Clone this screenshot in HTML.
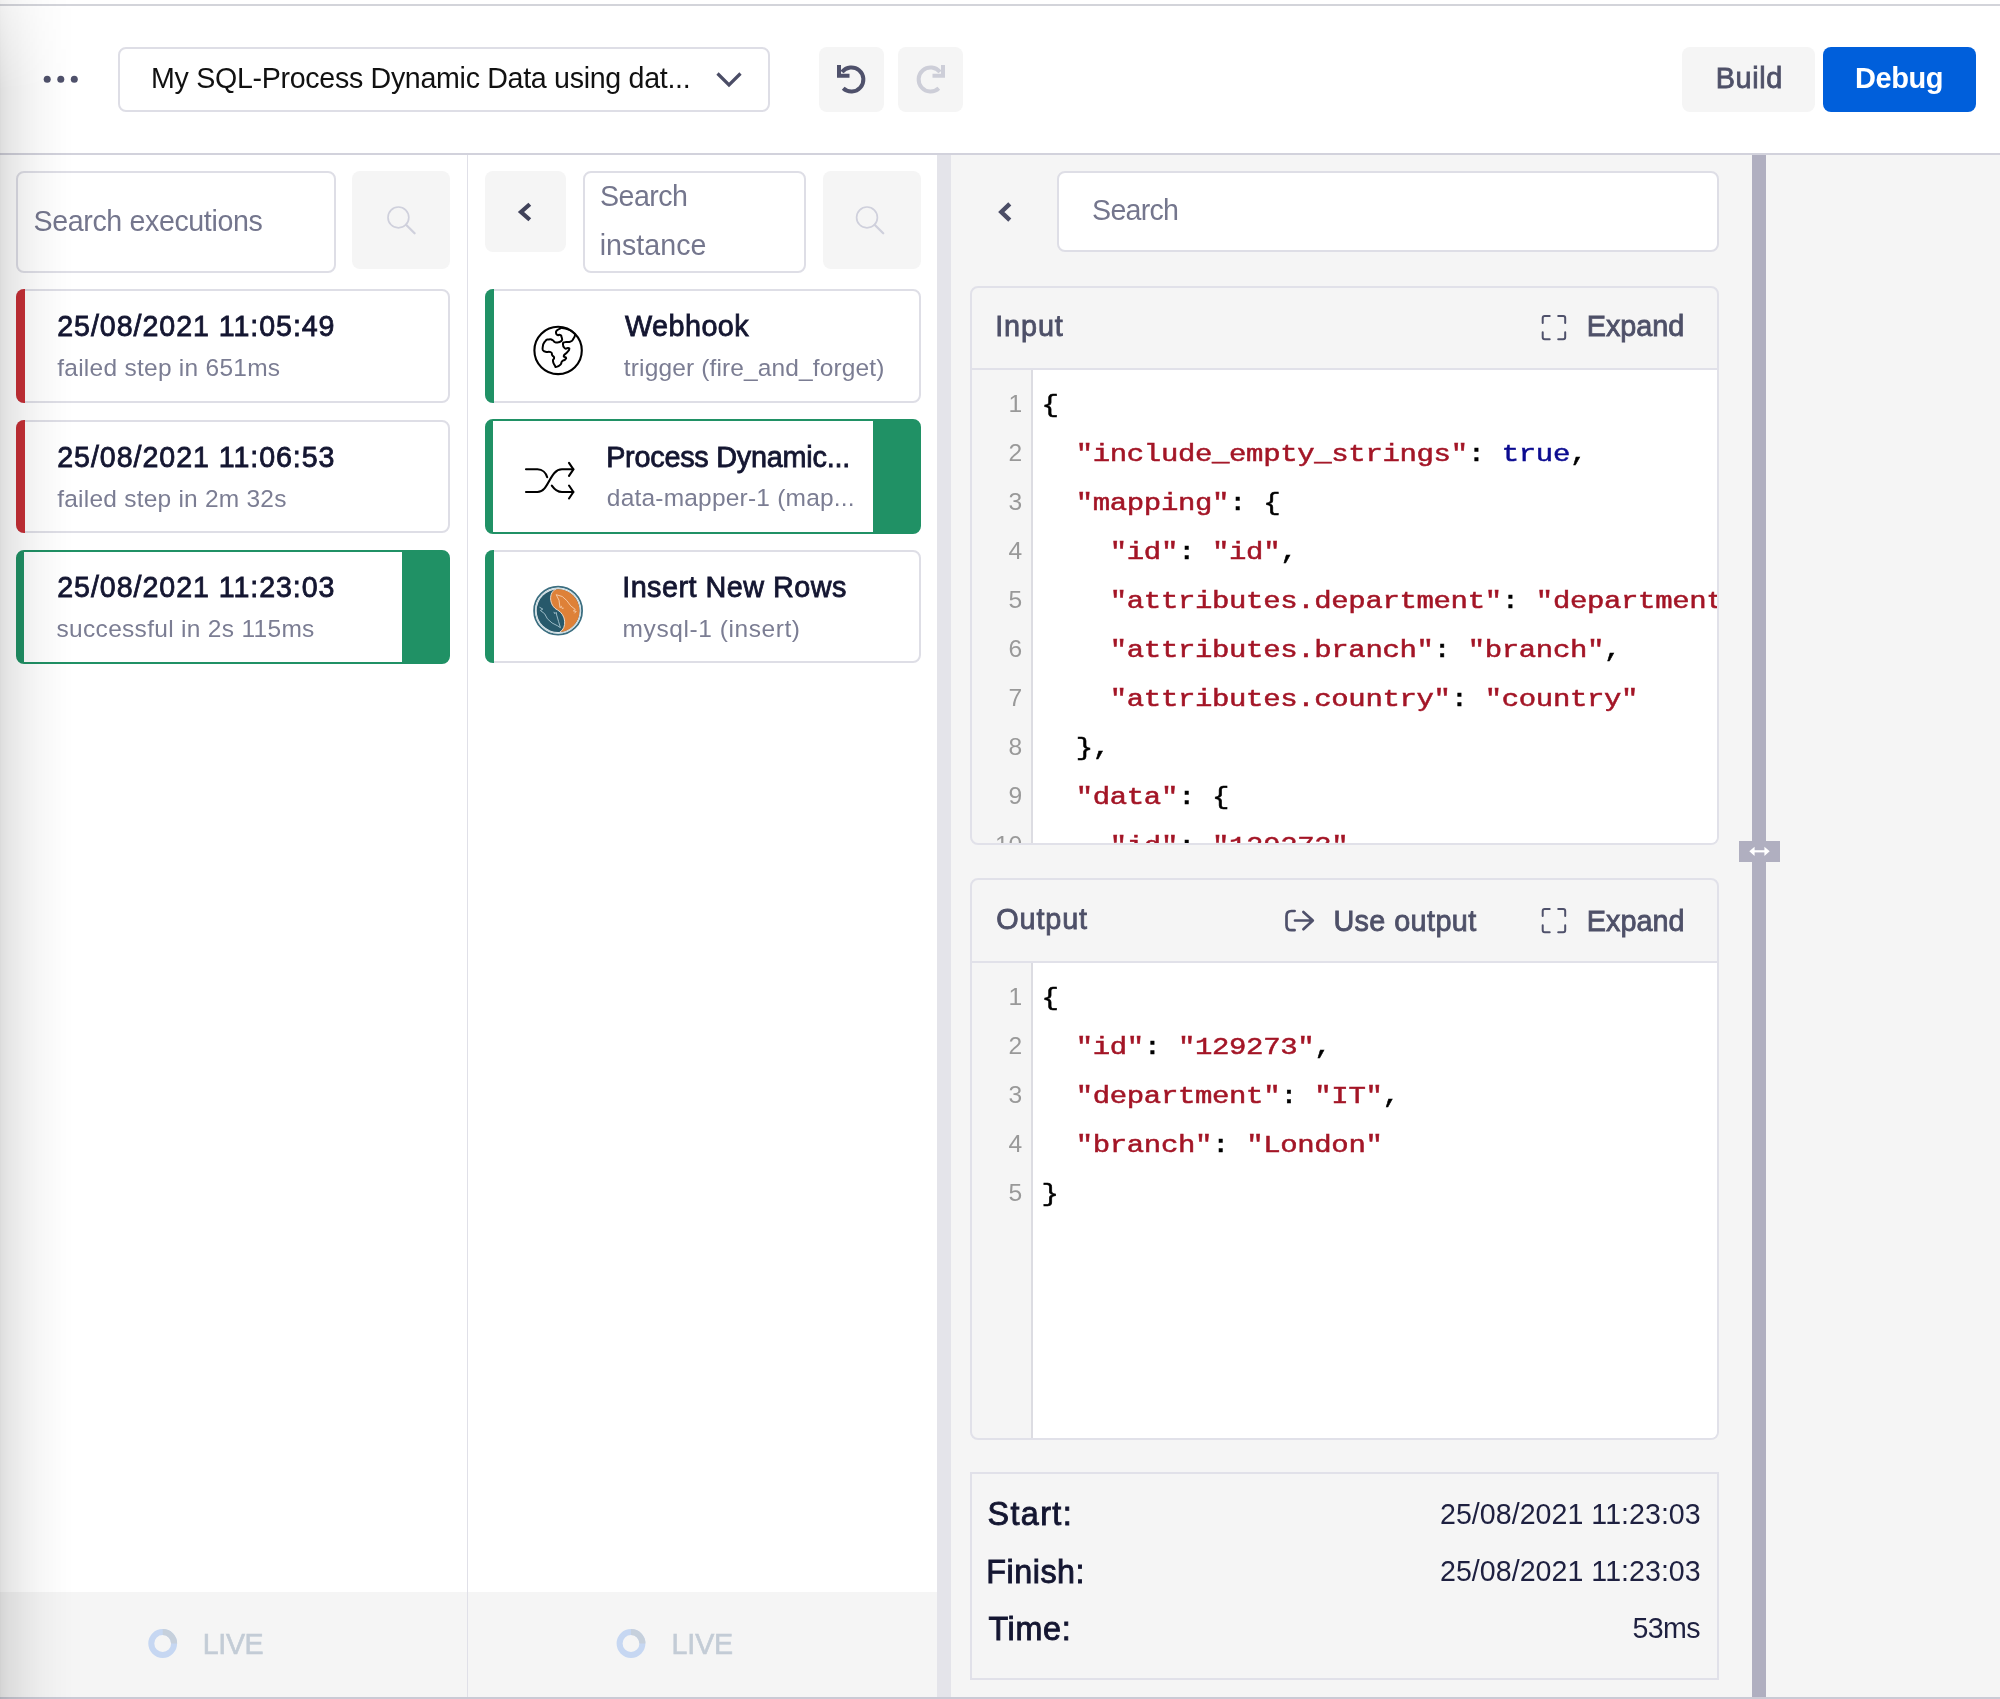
<!DOCTYPE html><html><head><meta charset="utf-8"><title>Debug</title><style>
html,body{margin:0;padding:0}
body{width:2000px;height:1699px;position:relative;overflow:hidden;background:#fff;font-family:"Liberation Sans",sans-serif}
.a{position:absolute;box-sizing:border-box}
.t{position:absolute;white-space:nowrap;font-family:"Liberation Sans",sans-serif}
.m{position:absolute;white-space:pre;font-family:"Liberation Mono",monospace;font-size:29px;letter-spacing:-.36px;line-height:49px;color:#000;transform:scaleY(.815);transform-origin:0 32.3px;-webkit-text-stroke:.6px}
.ln{position:absolute;white-space:nowrap;font-family:"Liberation Sans",sans-serif;font-size:24.6px;line-height:49px;color:#999;text-align:right;width:40px}
.k{color:#a31526}.b{color:#0b0b90}
svg{position:absolute;overflow:visible}
</style></head><body><div id="root" style="position:absolute;left:0;top:0;width:2000px;height:1699px;overflow:hidden;background:#fff;will-change:transform">
<div class="a" style="left:0px;top:4px;width:2000px;height:2px;background:#d3d4da"></div>
<div class="a" style="left:0px;top:153px;width:2000px;height:2px;background:#d2d2dc"></div>
<div class="a" style="left:0px;top:1592.4px;width:467px;height:104.6px;background:#f5f5f5"></div>
<div class="a" style="left:468px;top:1592.4px;width:469px;height:104.6px;background:#f5f5f5"></div>
<div class="a" style="left:466.6px;top:155px;width:1.8px;height:1542px;background:#e0e0e8"></div>
<div class="a" style="left:937px;top:155px;width:14px;height:1542px;background:#e4e4ea"></div>
<div class="a" style="left:951px;top:155px;width:1049px;height:1542px;background:#f5f5f5"></div>
<div class="a" style="left:1752px;top:155px;width:14px;height:1542px;background:#b0afc0"></div>
<div class="a" style="left:1739px;top:841px;width:41px;height:21px;background:#b0afc0"></div>
<div class="a" style="left:0px;top:1696.5px;width:2000px;height:2.5px;background:#cacad5"></div>
<svg style="left:40px;top:72px" width="42" height="14"><circle cx="7.2" cy="7.2" r="3.5" fill="#4f516b"/><circle cx="20.8" cy="7.2" r="3.5" fill="#4f516b"/><circle cx="34.3" cy="7.2" r="3.5" fill="#4f516b"/></svg>
<div class="a" style="left:118px;top:47px;width:652px;height:65px;background:#fff;border:2px solid #dedee6;border-radius:8px"></div>
<div class="t" style="left:151.08px;top:63.59px;font-size:28.6px;line-height:28.6px;letter-spacing:-0.305px;color:#111;font-weight:400;">My SQL-Process Dynamic Data using dat...</div>
<svg style="left:0;top:0" width="2000" height="160"><path d="M717.5 73.5 L729 85 L740.5 73.5" fill="none" stroke="#4b4d66" stroke-width="3.2"/></svg>
<div class="a" style="left:819px;top:47px;width:65px;height:65px;background:#f5f5f5;border-radius:8px"></div>
<div class="a" style="left:898px;top:47px;width:65px;height:65px;background:#f5f5f5;border-radius:8px"></div>
<svg style="left:0;top:0" width="2000" height="160"><path d="M842 72 A12 12 0 1 1 843.2 88.3" fill="none" stroke="#4f516b" stroke-width="4"/><path d="M839 65 V75.7 H849.5" fill="none" stroke="#4f516b" stroke-width="4"/><path d="M940 72 A12 12 0 1 0 938.8 88.3" fill="none" stroke="#cdced8" stroke-width="4"/><path d="M943 65 V75.7 H932.5" fill="none" stroke="#cdced8" stroke-width="4"/></svg>
<div class="a" style="left:1682px;top:47px;width:133px;height:65px;background:#f5f5f5;border-radius:8px"></div>
<div class="a" style="left:1823px;top:47px;width:153px;height:65px;background:#005fdb;border-radius:8px"></div>
<div class="t" style="left:1715.69px;top:63.82px;font-size:28.8px;line-height:28.8px;letter-spacing:0.626px;color:#4e5068;font-weight:400;-webkit-text-stroke:0.8px #4e5068;">Build</div>
<div class="t" style="left:1855.00px;top:63.65px;font-size:29px;line-height:29px;letter-spacing:-0.456px;color:#fff;font-weight:700;">Debug</div>
<div class="a" style="left:16px;top:171px;width:320px;height:102px;background:#fff;border:2px solid #dedee6;border-radius:8px"></div>
<div class="t" style="left:33.49px;top:206.69px;font-size:28.6px;line-height:28.6px;letter-spacing:-0.372px;color:#74768d;font-weight:400;">Search executions</div>
<div class="a" style="left:352px;top:171px;width:98px;height:98px;background:#f5f5f5;border-radius:8px"></div>
<svg style="left:0;top:0" width="2000" height="300"><circle cx="398.4" cy="217.4" r="10.4" fill="none" stroke="#cfd0dc" stroke-width="1.7"/><path d="M406 224.8 L414.6 233.3" stroke="#cfd0dc" stroke-width="2.3" stroke-linecap="round"/></svg>
<div class="a" style="left:16px;top:289.2px;width:434px;height:113.8px;background:#fff;border:2px solid #dedee6;border-radius:8px;overflow:hidden"></div>
<div class="a" style="left:16px;top:289.2px;width:8.7px;height:113.8px;background:#c62f36;border-radius:8px 0 0 8px"></div>
<div class="t" style="left:57.27px;top:312.29px;font-size:28.6px;line-height:28.6px;letter-spacing:0.946px;color:#141631;font-weight:400;-webkit-text-stroke:0.8px #141631;">25/08/2021 11:05:49</div>
<div class="t" style="left:57.20px;top:356.36px;font-size:24.5px;line-height:24.5px;letter-spacing:0.263px;color:#7b7d93;font-weight:400;">failed step in 651ms</div>
<div class="a" style="left:16px;top:419.6px;width:434px;height:113.9px;background:#fff;border:2px solid #dedee6;border-radius:8px;overflow:hidden"></div>
<div class="a" style="left:16px;top:419.6px;width:8.7px;height:113.9px;background:#c62f36;border-radius:8px 0 0 8px"></div>
<div class="t" style="left:57.27px;top:442.59px;font-size:28.6px;line-height:28.6px;letter-spacing:0.945px;color:#141631;font-weight:400;-webkit-text-stroke:0.8px #141631;">25/08/2021 11:06:53</div>
<div class="t" style="left:57.20px;top:486.56px;font-size:24.5px;line-height:24.5px;letter-spacing:0.228px;color:#7b7d93;font-weight:400;">failed step in 2m 32s</div>
<div class="a" style="left:16px;top:549.8px;width:434.2px;height:114.2px;background:#fff;border:2px solid #209165;border-left-width:8px;border-right-width:48.8px;border-radius:8px"></div>
<div class="t" style="left:57.27px;top:572.99px;font-size:28.6px;line-height:28.6px;letter-spacing:0.945px;color:#141631;font-weight:400;-webkit-text-stroke:0.8px #141631;">25/08/2021 11:23:03</div>
<div class="t" style="left:56.57px;top:616.76px;font-size:24.5px;line-height:24.5px;letter-spacing:0.301px;color:#7b7d93;font-weight:400;">successful in 2s 115ms</div>
<svg style="left:0;top:0" width="2000" height="1699"><circle cx="162.7" cy="1643.5" r="11.4" fill="none" stroke="#c6d7f2" stroke-width="6"/><path d="M162.7 1632.1 A11.4 11.4 0 0 1 174.1 1643.5" fill="none" stroke="#c6d0dc" stroke-width="6"/></svg>
<div class="t" style="left:202.81px;top:1629.89px;font-size:28.6px;line-height:28.6px;letter-spacing:-0.374px;color:#c3ccd6;font-weight:400;-webkit-text-stroke:0.6px #c3ccd6;">LIVE</div>
<svg style="left:0;top:0" width="2000" height="1699"><circle cx="631" cy="1643.5" r="11.4" fill="none" stroke="#c6d7f2" stroke-width="6"/><path d="M631 1632.1 A11.4 11.4 0 0 1 642.4 1643.5" fill="none" stroke="#c6d0dc" stroke-width="6"/></svg>
<div class="t" style="left:671.54px;top:1629.89px;font-size:28.6px;line-height:28.6px;letter-spacing:-0.111px;color:#c3ccd6;font-weight:400;-webkit-text-stroke:0.6px #c3ccd6;">LIVE</div>
<div class="a" style="left:485px;top:171px;width:81px;height:81px;background:#f5f5f5;border-radius:8px"></div>
<svg style="left:0;top:0" width="2000" height="300"><path d="M529.8 204.2 L521 212 L529.8 219.8" fill="none" stroke="#40425a" stroke-width="4.2"/><path d="M1009.8 203.8 L1001.3 212 L1009.8 220.2" fill="none" stroke="#4b4d66" stroke-width="4.4"/></svg>
<div class="a" style="left:583px;top:171px;width:223px;height:102px;background:#fff;border:2px solid #dedee6;border-radius:8px"></div>
<div class="t" style="left:600.08px;top:181.79px;font-size:28.6px;line-height:28.6px;letter-spacing:-0.541px;color:#74768d;font-weight:400;">Search</div>
<div class="t" style="left:599.66px;top:230.79px;font-size:28.6px;line-height:28.6px;letter-spacing:0.040px;color:#74768d;font-weight:400;">instance</div>
<div class="a" style="left:823px;top:171px;width:98px;height:98px;background:#f5f5f5;border-radius:8px"></div>
<svg style="left:0;top:0" width="2000" height="300"><circle cx="867" cy="217.4" r="10.4" fill="none" stroke="#cfd0dc" stroke-width="1.7"/><path d="M874.6 224.8 L883.2 233.3" stroke="#cfd0dc" stroke-width="2.3" stroke-linecap="round"/></svg>
<div class="a" style="left:485px;top:289.2px;width:436px;height:113.8px;background:#fff;border:2px solid #dedee6;border-radius:8px;overflow:hidden"></div>
<div class="a" style="left:485px;top:289.2px;width:8.7px;height:113.8px;background:#209165;border-radius:8px 0 0 8px"></div>
<div class="t" style="left:625.00px;top:312.32px;font-size:28.8px;line-height:28.8px;letter-spacing:0.430px;color:#141631;font-weight:400;-webkit-text-stroke:0.8px #141631;">Webhook</div>
<div class="t" style="left:623.86px;top:356.36px;font-size:24.5px;line-height:24.5px;letter-spacing:0.132px;color:#7b7d93;font-weight:400;">trigger (fire_and_forget)</div>
<div class="a" style="left:485px;top:419px;width:436px;height:115px;background:#fff;border:2px solid #209165;border-left-width:8px;border-right-width:48.8px;border-radius:8px"></div>
<div class="t" style="left:606.14px;top:442.52px;font-size:28.8px;line-height:28.8px;letter-spacing:-0.232px;color:#141631;font-weight:400;-webkit-text-stroke:0.8px #141631;">Process Dynamic...</div>
<div class="t" style="left:606.80px;top:486.36px;font-size:24.5px;line-height:24.5px;letter-spacing:0.207px;color:#7b7d93;font-weight:400;">data-mapper-1 (map...</div>
<div class="a" style="left:485px;top:549.8px;width:436px;height:113.6px;background:#fff;border:2px solid #dedee6;border-radius:8px;overflow:hidden"></div>
<div class="a" style="left:485px;top:549.8px;width:8.7px;height:113.6px;background:#209165;border-radius:8px 0 0 8px"></div>
<div class="t" style="left:622.17px;top:572.62px;font-size:28.8px;line-height:28.8px;letter-spacing:0.476px;color:#141631;font-weight:400;-webkit-text-stroke:0.8px #141631;">Insert New Rows</div>
<div class="t" style="left:622.61px;top:616.56px;font-size:24.5px;line-height:24.5px;letter-spacing:0.574px;color:#7b7d93;font-weight:400;">mysql-1 (insert)</div>
<svg style="left:0;top:0" width="2000" height="700"><circle cx="558.1" cy="350.4" r="23.7" fill="none" stroke="#000" stroke-width="2.1"/><path d="M560.49 328.46 C559.39 329.05 558.68 328.86 557.19 330.24 C555.70 331.63 556.02 331.03 556.02 332.60 C556.02 334.17 555.86 334.17 557.19 334.95 C558.53 335.74 558.61 334.40 560.02 334.95 C561.43 335.50 560.99 334.56 561.43 336.60 C561.87 338.64 563.22 339.14 561.34 341.07 C559.45 343.00 558.73 342.71 555.78 342.39 C552.83 342.08 554.84 341.12 552.49 340.13 C550.13 339.14 551.23 338.95 548.72 339.43 C546.21 339.90 546.96 338.95 544.95 341.54 C542.94 344.13 542.85 343.90 542.69 347.19 C542.54 350.49 541.85 349.78 544.48 351.43 C547.12 353.08 548.01 350.88 550.60 352.14 C553.19 353.39 551.07 353.31 552.25 355.20 C553.43 357.08 553.90 355.90 554.13 357.79 C554.37 359.67 552.72 358.26 552.96 360.85 C553.19 363.44 553.66 363.55 554.84 365.56 C556.02 367.56 554.60 367.19 556.49 366.87 C558.37 366.56 558.65 366.47 560.49 364.61 C562.33 362.76 560.43 363.04 562.00 361.32 C563.57 359.59 563.90 360.69 565.20 359.44 C566.50 358.18 566.37 358.73 565.90 357.55 C565.43 356.37 563.39 357.63 563.79 355.90 C564.18 354.18 565.28 354.57 567.08 352.37 C568.89 350.18 568.89 350.76 569.20 349.31 C569.51 347.87 569.48 348.40 568.02 348.04 C566.56 347.68 566.52 349.58 564.82 348.23 C563.13 346.88 562.81 346.03 562.94 343.99 C563.06 341.95 562.72 342.89 565.20 342.11 C567.68 341.32 567.55 342.93 570.38 341.64 C573.20 340.35 572.07 340.60 573.67 338.25 C575.27 335.89 574.68 335.80 575.18 334.58" fill="none" stroke="#000" stroke-width="2" stroke-linejoin="round" stroke-linecap="round"/><path d="M560.5 328 Q571 329 575.2 334.5" fill="none" stroke="#000" stroke-width="1.6"/><g fill="none" stroke="#000" stroke-width="2.1" stroke-linecap="round" stroke-linejoin="round"><path d="M526 469.3 H537.5 C542.5 469.3 546 473 547.2 477.2"/><path d="M526 492 H537.5 C549 492 549.5 469.3 562 469.3 H573.3"/><path d="M551.8 485.6 C554.5 489.5 558 492 562 492 H573.3"/><path d="M569 462.8 L573.4 469.3 L569 475.8"/><path d="M569 485.5 L573.4 492 L569 498.5"/></g><g transform="translate(558.1 610.7)"><circle r="24.2" fill="#fff"/><circle r="24" fill="none" stroke="#3b6e80" stroke-width="1.8"/><circle r="22.3" fill="none" stroke="#c9d9df" stroke-width="1.2"/><circle r="21.4" fill="#27596b"/><path d="M-2.3 -21.3 A21.4 21.4 0 0 1 21.4 0 A21.4 21.4 0 0 1 1.9 21.3 C9 17 8 4 -0.5 -0.7 C-9.5 -5 -9.5 -19 -2.3 -21.3 Z" fill="#de8138"/><path d="M1.9 21.3 C9 17 8 4 -0.5 -0.7 C-9.5 -5 -9.5 -19 -2.3 -21.3" fill="none" stroke="#f1e4d8" stroke-width="0.9"/><path d="M-1.9 -16.0 L0.9 -10.5 L1.9 -3.0 L3.3 -4.4 L4.2 -2.1 L5.6 -2.6 M-1.9 -16.0 L4.2 -14.2 L8.8 -10.0 L12.6 -4.9 L17.2 -1.2 L15.3 0.2 L18.1 0.7 L16.3 2.6" fill="none" stroke="#f5cfae" stroke-width="0.9" stroke-linejoin="round"/><path d="M-18.6 -3.5 L-15.3 -1.6 L-17.7 -0.2 L-13.5 3.0 L-10.7 8.1 L-6.0 12.3 L-0.5 15.1 L2.3 17.0 L0.5 10.9 L-1.4 4.4 L-1.9 1.6 L-3.3 3.0 L-4.2 1.2" fill="none" stroke="#a9c6d0" stroke-width="0.9" stroke-linejoin="round"/></g></svg>
<div class="a" style="left:1057px;top:171px;width:662px;height:81px;background:#fff;border:2px solid #dedee6;border-radius:8px"></div>
<div class="t" style="left:1092.08px;top:196.29px;font-size:28.6px;line-height:28.6px;letter-spacing:-0.741px;color:#74768d;font-weight:400;">Search</div>
<div class="a" style="left:970px;top:286px;width:749px;height:559px;background:#f5f5f5;border:2px solid #e1e1e9;border-radius:8px;overflow:hidden">
<div class="a" style="left:0;top:80px;width:745px;height:2px;background:#e1e1e9"></div>
<div class="a" style="left:61px;top:82px;width:684px;height:477px;background:#fff"></div>
<div class="a" style="left:59px;top:82px;width:2px;height:477px;background:#dcdce2"></div>
<div class="ln" style="left:10.3px;top:91.33px">1</div>
<div class="m" style="left:69.6px;top:92.33px">{</div>
<div class="ln" style="left:10.3px;top:140.33px">2</div>
<div class="m" style="left:69.6px;top:141.33px">  <span class="k">&quot;include_empty_strings&quot;</span>: <span class="b">true</span>,</div>
<div class="ln" style="left:10.3px;top:189.33px">3</div>
<div class="m" style="left:69.6px;top:190.33px">  <span class="k">&quot;mapping&quot;</span>: {</div>
<div class="ln" style="left:10.3px;top:238.33px">4</div>
<div class="m" style="left:69.6px;top:239.33px">    <span class="k">&quot;id&quot;</span>: <span class="k">&quot;id&quot;</span>,</div>
<div class="ln" style="left:10.3px;top:287.33px">5</div>
<div class="m" style="left:69.6px;top:288.33px">    <span class="k">&quot;attributes.department&quot;</span>: <span class="k">&quot;department&quot;</span>,</div>
<div class="ln" style="left:10.3px;top:336.33px">6</div>
<div class="m" style="left:69.6px;top:337.33px">    <span class="k">&quot;attributes.branch&quot;</span>: <span class="k">&quot;branch&quot;</span>,</div>
<div class="ln" style="left:10.3px;top:385.33px">7</div>
<div class="m" style="left:69.6px;top:386.33px">    <span class="k">&quot;attributes.country&quot;</span>: <span class="k">&quot;country&quot;</span></div>
<div class="ln" style="left:10.3px;top:434.33px">8</div>
<div class="m" style="left:69.6px;top:435.33px">  },</div>
<div class="ln" style="left:10.3px;top:483.33px">9</div>
<div class="m" style="left:69.6px;top:484.33px">  <span class="k">&quot;data&quot;</span>: {</div>
<div class="ln" style="left:10.3px;top:532.33px">10</div>
<div class="m" style="left:69.6px;top:533.33px">    <span class="k">&quot;id&quot;</span>: <span class="k">&quot;129273&quot;</span>,</div>
</div>
<div class="a" style="left:970px;top:878px;width:749px;height:562px;background:#f5f5f5;border:2px solid #e1e1e9;border-radius:8px;overflow:hidden">
<div class="a" style="left:0;top:81px;width:745px;height:2px;background:#e1e1e9"></div>
<div class="a" style="left:61px;top:83px;width:684px;height:479px;background:#fff"></div>
<div class="a" style="left:59px;top:83px;width:2px;height:479px;background:#dcdce2"></div>
<div class="ln" style="left:10.3px;top:92.13px">1</div>
<div class="m" style="left:69.6px;top:93.13px">{</div>
<div class="ln" style="left:10.3px;top:141.13px">2</div>
<div class="m" style="left:69.6px;top:142.13px">  <span class="k">&quot;id&quot;</span>: <span class="k">&quot;129273&quot;</span>,</div>
<div class="ln" style="left:10.3px;top:190.13px">3</div>
<div class="m" style="left:69.6px;top:191.13px">  <span class="k">&quot;department&quot;</span>: <span class="k">&quot;IT&quot;</span>,</div>
<div class="ln" style="left:10.3px;top:239.13px">4</div>
<div class="m" style="left:69.6px;top:240.13px">  <span class="k">&quot;branch&quot;</span>: <span class="k">&quot;London&quot;</span></div>
<div class="ln" style="left:10.3px;top:288.13px">5</div>
<div class="m" style="left:69.6px;top:289.13px">}</div>
</div>
<div class="t" style="left:995.13px;top:312.12px;font-size:28.8px;line-height:28.8px;letter-spacing:0.918px;color:#4e5068;font-weight:400;-webkit-text-stroke:0.8px #4e5068;">Input</div>
<div class="t" style="left:1586.73px;top:312.12px;font-size:28.8px;line-height:28.8px;letter-spacing:-0.047px;color:#4e5068;font-weight:400;-webkit-text-stroke:0.8px #4e5068;">Expand</div>
<div class="t" style="left:996.28px;top:904.62px;font-size:28.8px;line-height:28.8px;letter-spacing:0.859px;color:#4e5068;font-weight:400;-webkit-text-stroke:0.8px #4e5068;">Output</div>
<div class="t" style="left:1333.38px;top:906.72px;font-size:28.8px;line-height:28.8px;letter-spacing:0.394px;color:#4e5068;font-weight:400;-webkit-text-stroke:0.8px #4e5068;">Use output</div>
<div class="t" style="left:1586.73px;top:906.72px;font-size:28.8px;line-height:28.8px;letter-spacing:0.033px;color:#4e5068;font-weight:400;-webkit-text-stroke:0.8px #4e5068;">Expand</div>
<svg style="left:0;top:0" width="2000" height="1000"><path d="M1542.7 323.05 V318.05 Q1542.7 316.05 1544.7 316.05 H1549.7 M1558.2 316.05 H1563.2 Q1565.2 316.05 1565.2 318.05 V323.05 M1565.2 332.25 V337.25 Q1565.2 339.25 1563.2 339.25 H1558.2 M1549.7 339.25 H1544.7 Q1542.7 339.25 1542.7 337.25 V332.25" fill="none" stroke="#4f516b" stroke-width="2" stroke-linecap="round" stroke-linejoin="round"/></svg>
<svg style="left:0;top:0" width="2000" height="1000"><path d="M1542.7 915.95 V910.95 Q1542.7 908.95 1544.7 908.95 H1549.7 M1558.2 908.95 H1563.2 Q1565.2 908.95 1565.2 910.95 V915.95 M1565.2 925.15 V930.15 Q1565.2 932.15 1563.2 932.15 H1558.2 M1549.7 932.15 H1544.7 Q1542.7 932.15 1542.7 930.15 V925.15" fill="none" stroke="#4f516b" stroke-width="2" stroke-linecap="round" stroke-linejoin="round"/></svg>
<svg style="left:0;top:0" width="2000" height="1000"><g fill="none" stroke="#4f516b" stroke-width="2.7" stroke-linecap="round" stroke-linejoin="round"><path d="M1294.6 911 H1291.4 Q1286.5 911 1286.5 916 V925.2 Q1286.5 930.2 1291.4 930.2 H1294.6"/><path d="M1295 920.5 H1312.6 M1303.4 911.9 L1312.8 920.5 L1303.4 929.2"/></g></svg>
<svg style="left:0;top:0" width="2000" height="1000"><path d="M1753 851.3 H1766" stroke="#fff" stroke-width="2.2"/><path d="M1749.3 851.3 L1754.6 846.7 V855.9 Z M1769.7 851.3 L1764.4 846.7 V855.9 Z" fill="#fff"/></svg>
<div class="a" style="left:970px;top:1472px;width:749px;height:208px;border:2px solid #e1e1e9"></div>
<div class="t" style="left:987.62px;top:1498.16px;font-size:32.3px;line-height:32.3px;letter-spacing:1.364px;color:#141631;font-weight:400;-webkit-text-stroke:0.9px #141631;">Start:</div>
<div class="t" style="left:986.37px;top:1555.56px;font-size:32.3px;line-height:32.3px;letter-spacing:0.511px;color:#141631;font-weight:400;-webkit-text-stroke:0.9px #141631;">Finish:</div>
<div class="t" style="left:988.38px;top:1612.56px;font-size:32.3px;line-height:32.3px;letter-spacing:0.671px;color:#141631;font-weight:400;-webkit-text-stroke:0.9px #141631;">Time:</div>
<div class="t" style="left:1439.97px;top:1499.89px;font-size:28.6px;line-height:28.6px;letter-spacing:0.028px;color:#1e2040;font-weight:400;">25/08/2021 11:23:03</div>
<div class="t" style="left:1439.97px;top:1556.89px;font-size:28.6px;line-height:28.6px;letter-spacing:0.028px;color:#1e2040;font-weight:400;">25/08/2021 11:23:03</div>
<div class="t" style="left:1632.42px;top:1613.89px;font-size:28.6px;line-height:28.6px;letter-spacing:-0.621px;color:#1e2040;font-weight:400;">53ms</div>
<div class="a" style="left:0;top:0;width:76px;height:1699px;background:linear-gradient(to right,rgba(0,0,0,.15) 0,rgba(0,0,0,.125) 1.5px,rgba(0,0,0,.095) 10px,rgba(0,0,0,.058) 25px,rgba(0,0,0,.03) 40px,rgba(0,0,0,.01) 58px,rgba(0,0,0,0) 74px);-webkit-mask-image:linear-gradient(to bottom,rgba(0,0,0,.45) 0,#000 90px);mask-image:linear-gradient(to bottom,rgba(0,0,0,.45) 0,#000 90px)"></div>
</div></body></html>
